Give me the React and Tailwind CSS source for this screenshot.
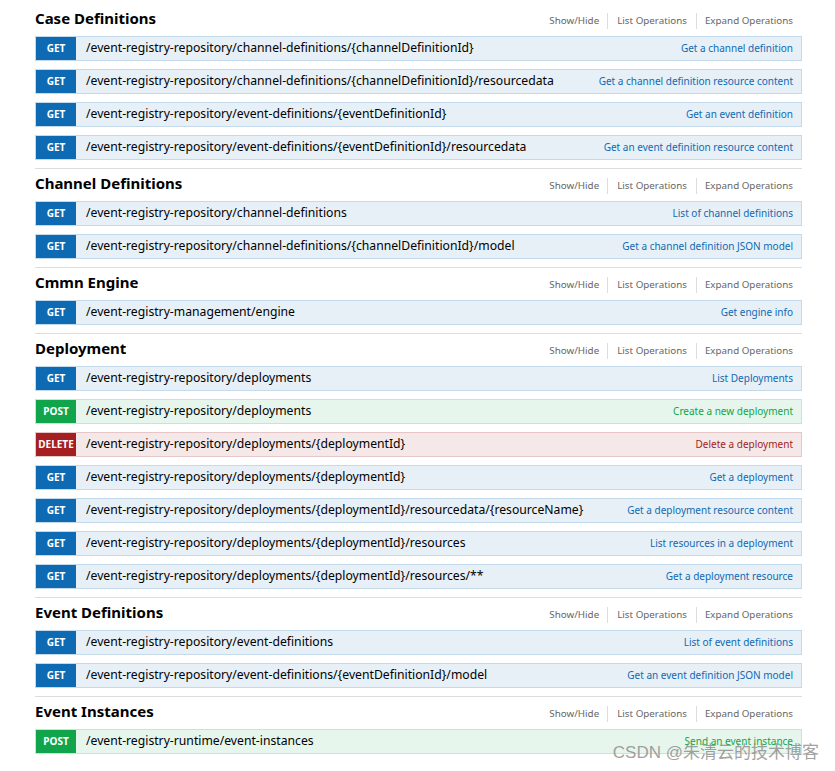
import React from "react";

const methodStyles = {
  GET: {
    row: "bg-[#e7f0f7] border-[#c3d9ec]",
    badge: "bg-[#0f6ab4]",
    desc: "text-[#0f6ab4]",
  },
  POST: {
    row: "bg-[#e7f6ec] border-[#c3e8d1]",
    badge: "bg-[#10a54a]",
    desc: "text-[#10a54a]",
  },
  DELETE: {
    row: "bg-[#f5e8e8] border-[#e8c6c7]",
    badge: "bg-[#a41e22]",
    desc: "text-[#a41e22]",
  },
};

const sections = [
  {
    title: "Case Definitions",
    ops: [
      ["GET", "/event-registry-repository/channel-definitions/{channelDefinitionId}", "Get a channel definition"],
      ["GET", "/event-registry-repository/channel-definitions/{channelDefinitionId}/resourcedata", "Get a channel definition resource content"],
      ["GET", "/event-registry-repository/event-definitions/{eventDefinitionId}", "Get an event definition"],
      ["GET", "/event-registry-repository/event-definitions/{eventDefinitionId}/resourcedata", "Get an event definition resource content"],
    ],
  },
  {
    title: "Channel Definitions",
    ops: [
      ["GET", "/event-registry-repository/channel-definitions", "List of channel definitions"],
      ["GET", "/event-registry-repository/channel-definitions/{channelDefinitionId}/model", "Get a channel definition JSON model"],
    ],
  },
  {
    title: "Cmmn Engine",
    ops: [["GET", "/event-registry-management/engine", "Get engine info"]],
  },
  {
    title: "Deployment",
    ops: [
      ["GET", "/event-registry-repository/deployments", "List Deployments"],
      ["POST", "/event-registry-repository/deployments", "Create a new deployment"],
      ["DELETE", "/event-registry-repository/deployments/{deploymentId}", "Delete a deployment"],
      ["GET", "/event-registry-repository/deployments/{deploymentId}", "Get a deployment"],
      ["GET", "/event-registry-repository/deployments/{deploymentId}/resourcedata/{resourceName}", "Get a deployment resource content"],
      ["GET", "/event-registry-repository/deployments/{deploymentId}/resources", "List resources in a deployment"],
      ["GET", "/event-registry-repository/deployments/{deploymentId}/resources/**", "Get a deployment resource"],
    ],
  },
  {
    title: "Event Definitions",
    ops: [
      ["GET", "/event-registry-repository/event-definitions", "List of event definitions"],
      ["GET", "/event-registry-repository/event-definitions/{eventDefinitionId}/model", "Get an event definition JSON model"],
    ],
  },
  {
    title: "Event Instances",
    ops: [["POST", "/event-registry-runtime/event-instances", "Send an event instance"]],
  },
];

const SectionHeader = ({ title }) => (
  <div className="h-[32px] flex items-end justify-between pb-[6px]">
    <h2 className="text-[15px] leading-[20px] font-bold text-black mb-[2px]">{title}</h2>
    <div className="flex items-center text-[9.8px] leading-[14px] text-[#666] pr-[9px] mb-[1px]">
      <span className="pr-[8px]">Show/Hide</span>
      <div className="w-px h-[16px] bg-[#ddd]" />
      <span className="px-[9px]">List Operations</span>
      <div className="w-px h-[16px] bg-[#ddd]" />
      <span className="pl-[8px]">Expand Operations</span>
    </div>
  </div>
);

const Operation = ({ method, path, summary }) => {
  const s = methodStyles[method];
  return (
    <div className={`flex items-stretch h-[25px] mb-[8px] border ${s.row}`}>
      <div
        className={`w-[40px] shrink-0 flex items-center justify-center text-white text-[10px] font-bold ${s.badge}`}
      >
        {method}
      </div>
      <div className="flex-1 flex items-center pl-[10px] text-[12.2px] text-black whitespace-nowrap">
        {path}
      </div>
      <div className={`flex items-center pr-[8px] text-[10px] whitespace-nowrap ${s.desc}`}>
        {summary}
      </div>
    </div>
  );
};

export default function App() {
  return (
    <div
      className="relative w-[835px] h-[771px] overflow-hidden bg-white"
      style={{ fontFamily: '"Noto Sans", "Open Sans", sans-serif' }}
    >
      <div className="ml-[35px] w-[767px] pt-[4px]">
        {sections.map((sec, i) => (
          <div key={sec.title} className={i > 0 ? "border-t border-[#ddd]" : ""}>
            <SectionHeader title={sec.title} />
            {sec.ops.map(([m, p, d]) => (
              <Operation key={m + p} method={m} path={p} summary={d} />
            ))}
          </div>
        ))}
      </div>

      {/* CSDN watermark */}
      <div
        className="absolute right-[16px] bottom-[8px] text-[17px] leading-[20px] text-[#888]/80"
        style={{ fontFamily: '"Liberation Sans", "Noto Sans CJK SC", sans-serif' }}
      >
        CSDN @朱清云的技术博客
      </div>
    </div>
  );
}
